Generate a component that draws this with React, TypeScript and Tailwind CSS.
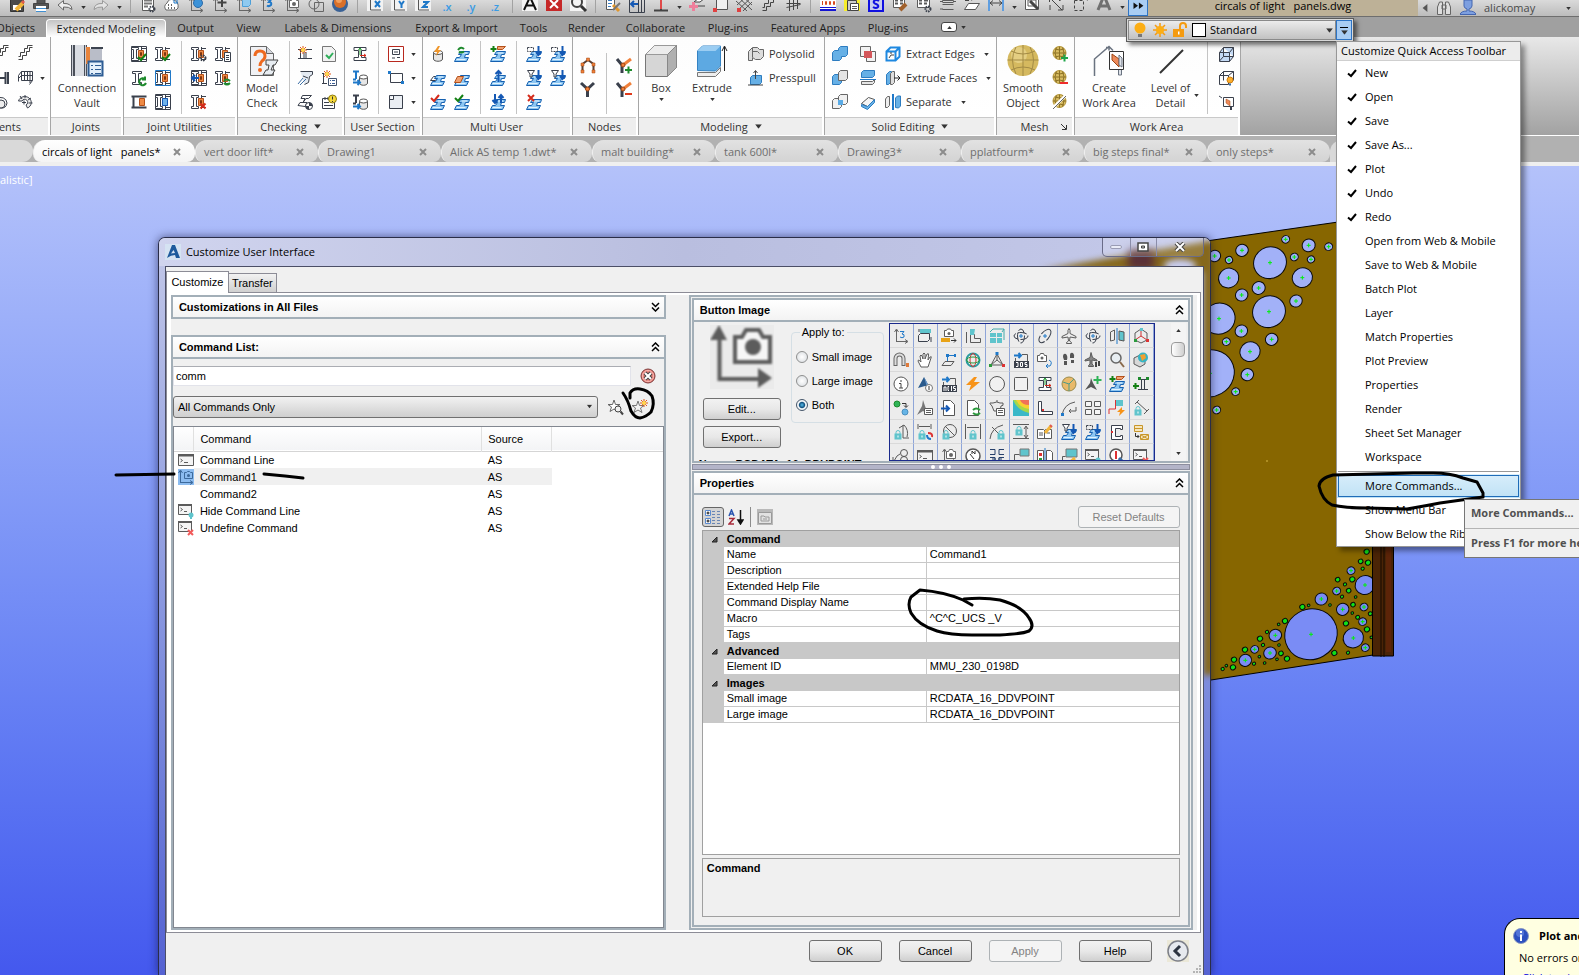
import type { ReactNode } from "react";

type PathProps = { d: string; c?: string; f?: string; w?: number };

const P = ({ d, c = "#5b5b5b", f = "none", w = 1 }: PathProps) => (
    <path d={d} stroke={c} fill={f} strokeWidth={w} />
);

const Dot = ({ x, y, r, f, c = "none" }: { x: number; y: number; r: number; f: string; c?: string }) => (
    <circle cx={x} cy={y} r={r} fill={f} stroke={c} />
);

// ---- shared icon parts ----
const TEAL = "#5fc4cc";
const DARK = "#3a404c";
const BLUE = "#1f78c8";

const beam = <P d="M1.5 1.5h9v2h-3v9h3v2h-9v-2h3v-9h-3z" c={DARK} f="#fff" />;
const joint = (
    <>
        <P d="M.5 1.5h7v2h-2v9h2v2h-7v-2h2v-9h-2z" c={DARK} f="#fff" />
        <P d="M10.5 1v14M15 2.5h-4M15 13.5h-4" c={DARK} />
        <P d="M7.5 4.5h5v7h-5z" c="#b4511a" f="#ee8a45" />
        <P d="M9.5 6.5h1v3h-1z" c="#7d3510" />
    </>
);
const frame = <P d="M.5.5h15v15H.5z" c={DARK} />;
const tick = (c: string) => <P d="M7 11l3 3 5-6" c={c} w={2} />;
const tickTop = (c: string) => <P d="M1 4l3 3 5-6" c={c} w={2} />;
const cross = (c: string) => <P d="M9.5 9.5l5 5m0-5l-5 5" c={c} w={2} />;
const plus = (c: string) => <P d="M12.5 8.5v7M9 12h7" c={c} w={2} />;
const gear = <circle cx="12" cy="12" r="2.5" fill="none" stroke={DARK} strokeWidth="2" strokeDasharray="1.5 .8" />;
const slab = (
    <>
        <P d="M6.5 5.5h9l-1 3h-3l-1 3h4l-2 4h-12l2-4h3l2-3h-3z" c="#1560b0" f="#8cc6f2" />
        <P d="M2.5 13.5h9M8 7h5" c="#e3f2fd" />
    </>
);
const lock = (
    <>
        <P d="M3 10V8.5a2 2 0 0 1 4 0V10" c={TEAL} />
        <path d="M1.500 9.500h7v6h-7z" fill={TEAL} />
        <path d="M4.500 11.500h1v2h-1z" fill="#fff" />
    </>
);
const axes = <P d="M3.5 14V2M1.5 4l2-3 2 3M3.5 13.5H14M12 11.5l3 2-3 2" c="#666" />;
const page = <P d="M2.5.5h7l4 4v11h-11z" c="#555" f="#fff" />;
const camera = (
    <>
        <P d="M5.5 3.5h2l1-2h3l1 2h2v7h-9z" c="#666" f="#fff" />
        <Dot x={10} y={7} r={2} f="#666" />
    </>
);
const terminal = (
    <>
        <P d="M.5 2.5h15v11H.5z" f="#f4f4f4" />
        <path d="M0 2h16v2.5H0z" fill="#5b5b5b" />
        <P d="M2.5 7l2 1.5-2 1.5M6 10.5h4" />
    </>
);
const terminalSmall = (
    <>
        <P d="M.5 1.5h13v10H.5z" f="#f4f4f4" />
        <path d="M0 1h14v2H0z" fill="#5b5b5b" />
        <P d="M2.5 5l2 1.5-2 1.5M6 8.5h3" />
    </>
);
const sunburst = (
    <>
        <P d="M6 0v8M2 4h8M3 1l6 6M9 1L3 7" c="#e0561b" />
        <Dot x={6} y={4} r={2} f="#ffd84d" />
    </>
);
const downArrow = <P d="M12.5 0v9M10 6l2.5 3L15 6" c="#1458b4" w={2} />;
const cyl = (
    <>
        <P d="M7.5 7v6c0 3 8 3 8 0V7" c="#555" f="#e6e6e6" />
        <ellipse cx="11.5" cy="7" rx="4" ry="2" fill="#fff" stroke="#555" />
    </>
);
const goldBall = (
    <>
        <Dot x={7.5} y={7} r={6.5} f="#d8bc62" c="#b39334" />
        <P d="M1 7h13M7.5.5v13M3 3q4.500 2 9 0M3 11q4.500-2 9 0M4.500 1.500q-3 5 0 11M10.500 1.500q3 5 0 11" c="#8d7224" />
    </>
);
const listCard = (
    <>
        <P d="M7.5 8.5h8v7h-8z" c="#44546e" f="#fff" />
        <P d="M9 10.5h1M11 10.5h3M9 13.5h1M11 13.5h3" c="#3a5c94" />
    </>
);

const icons: Record<string, ReactNode> = {
    // quick access toolbar
    saveAs: <><P d="M1.5.5h13v14h-13z" c="#333" f="#4a4a4a" /><path d="M4 8h8v5H4z" fill="#fff" /><P d="M7 13l7-7" c="#f2b53a" w={4} /><P d="M13 4l2 2" c="#e05a4e" w={3} /></>,
    print: <><P d="M4 6V1h8v5M.5 6.5h15v5H.5z" c="#444" f="#555" /><path d="M3 9h10v6H3z" fill="#fff" /><P d="M3 11.5h10M3 14.5h10" c="#3f8fd2" /></>,
    undo: <P d="M6.5 3.5v3q8-.5 8.5 6-3-3-8.5-2.5v3l-5.5-5z" c="#666" f="#eee" />,
    redo: <P d="M9.5 3.5v3q-8-.5-8.5 6 3-3 8.5-2.5v3l5.5-5z" c="#999" f="#e4e4e4" />,
    propertyList: <><P d="M2.5-.5h11v14h-11z" f="#fff" /><P d="M4 3.5h8M4 6.5h8M4 9.5h4" c="#777" w={2} />{gear}</>,
    pointCloud: <><P d="M2 13q-3-4 1-7 2-5 7-3 5 2 4 8l-2 2z" c="#666" f="#fff" /><P d="M4 8h1M7 8h1M4 11h1M7 11h1M10 11h1" w={2} c="#666" /><P d="M10 2v4h4M13 2v4" c={BLUE} /></>,
    ucsWorld: <>{axes}<Dot x={10} y={6} r={4.5} f="#3c92d8" c="#2a6aa8" /></>,
    ucsMove: <>{axes}<P d="M10 1v9M5.5 5.5h9" c="#444" w={2} /></>,
    ucsObject: <>{axes}<P d="M6.5 3.5l2-2h6v6l-2 2h-6z" c="#4d9fd8" f="#8fcaf0" /></>,
    ucs3: <>{axes}<P d="M7 2.5h4L9 5q3 0 2 3-2 2-4 .5" c={BLUE} w={2} /></>,
    ucsView: <>{axes}{camera}</>,
    region: <><P d="M6.5 5.5h9v9h-9z" c="#666" /><circle cx="6" cy="7" r="5" fill="none" stroke="#666" /></>,
    render: <><Dot x={8} y={7} r={8} f="#3a6296" /><Dot x={8} y={5} r={6} f="#d9702a" /><Dot x={7} y={3} r={3} f="#f0a060" /></>,
    axisX: <><path d="M0-1h16v15H0z" fill="#f2f2f2" /><P d="M3.5 0v13H14" c="#555" /><P d="M8 4l5 6M13 4l-5 6" c={BLUE} w={2} /></>,
    axisY: <><path d="M0-1h16v15H0z" fill="#f2f2f2" /><P d="M3.5 0v13H14" c="#555" /><P d="M8 4l2.5 3.5L13 4M10.5 7v4" c={BLUE} w={2} /></>,
    axisZ: <><path d="M0-1h16v15H0z" fill="#f2f2f2" /><P d="M3.5 0v13H14" c="#555" /><P d="M8 5h5l-5 5h5" c={BLUE} w={2} /></>,
    textStyle: <><path d="M0-1h16v15H0z" fill="#f5f5f5" /><P d="M2 13L8 0l6 13M4 8.5h8" c="#111" w={2} /></>,
    close: <><path d="M0-1h16v15H0z" fill="#c62828" /><P d="M4 3l8 8M12 3l-8 8" c="#fff" w={2} /></>,
    find: <><path d="M0-1h16v15H0z" fill="#f5f5f5" /><circle cx="7" cy="5" r="5" fill="none" stroke="#444" strokeWidth="2" /><P d="M11 9l5 5" c="#333" w={3} /></>,
    brushList: <><P d="M1.5-.5h8v13h-8z" f="#fff" /><P d="M3 3.5h4M3 6.5h4M3 9.5h3" c="#3a7cc0" /><P d="M8 8l6 6" c="#e0962c" w={3} /><P d="M8 13l7-7" c="#777" w={2} /></>,
    jointLeft: <>{frame}<P d="M9.5 0v15M12.5 0v15" c={DARK} /><P d="M2 7h7M5 4L2 7l3 3" c="#1458b4" w={2} /></>,
    weld: <><P d="M1 13.5h14M8 0v13" c="#444" w={2} /><P d="M8 1v11" c="#e04a4a" w={2} /></>,
    addBeam: <><P d="M5 5l5-4h6l-5 4zM8 9h8" c="#444" f="#fff" /><P d="M4.5 5v9M0 9.5h9" c="#ee7f9b" w={3} /></>,
    platePoint: <><P d="M3.5-.5h11v13h-11z" c="#555" f="#f1f1f1" /><path d="M0 11h4v4H0z" fill="#e04040" /></>,
    hatch: <><P d="M1 0l14 13M5-1l10 9M-1 4l11 10M15 0L1 13M10-1L0 8M15 5l-9 9" c="#555" /><path d="M0 11h4v4H0z" fill="#e04040" /></>,
    stairs: <P d="M1.5 13.5h4v-4h4v-4h3v-4h3M1.5 10.5h2v-4h4v-4h3v-3h5" c="#444" />,
    railing: <P d="M1.5 2.5h14M1.5 6.5h14M1.5 10.5l14-3M4.5 1v13M8.5 1v12M12.5 1v11" c="#444" />,
    thousand: <><path d="M0-1h16v15H0z" fill="#fff" /><path d="M0-1h16v3H0zM0 10h16v1H0zM0 12h16v2H0z" fill="#1414d2" /><P d="M2.5 4v4M5.5 4.5h1v3h-1zM9.5 4.5h1v3h-1zM13.5 4.5h1v3h-1z" c="#d84a1e" /></>,
    layers: <><path d="M0-1h16v15H0z" fill="#f7ee2c" /><P d="M3.5 3.5h9v10h-9z" c="#444" f="#ccc" /><P d="M6.5 6.5h8v7h-8z" c="#444" f="#fff" /><P d="M8 9.5h5M8 11.5h5" /></>,
    sCommand: <><P d="M1 0h14v14H1z" c="#1010e0" f="#c8cdee" w={2} /><P d="M11 4Q8 2 6 4q-1 2 2 3 3 1 2 3-2 2-5 0" c="#1010e0" w={2} /></>,
    listBrush: <><P d="M1.5.5h11v10h-11z" f="#fff" /><P d="M3 3.5h3M8 3.5h3M3 6.5h3M8 6.5h3" w={2} /><P d="M8 13l6-6" c="#a0602c" w={4} /></>,
    listGear: <><P d="M1.5.5h12v10h-12z" f="#fff" /><P d="M3 3.5h3M8 3.5h4M3 6.5h3M8 6.5h3" w={2} />{gear}</>,
    listRows: <P d="M2.5-.5h11v4h-11zM2.5 5.5h11M2.5 7.5h11M2.5 12.5h11M0 4.5h3M13 4.5h3M0 12h3" f="#f4f4f4" />,
    dxf: <><P d="M2 0v3h2V0M7 3l3-3M12 3V0h3" c="#444" w={2} /><P d="M.5 12.5l4-6h11l-4 6z" c="#555" f="#fff" /></>,
    dimension: <><P d="M1 0v14M15 0v14" c="#5f9ee0" w={2} /><P d="M2 6h12M5 3.5L2 6l3 2.5M11 3.5L14 6l-3 2.5" c="#444" /></>,
    picPen: <><P d="M1.5.5h13v12h-13zM4 3h8v6H4z" f="#fff" /><P d="M6 4l8 8" c="#444" w={3} /></>,
    scaleTool: <P d="M1.5 0v5M1 1h5M2 1l12 12M10 13h5V8M2 13V8M9 0l3 4M12 0v4" c="#444" />,
    dashedBox: <><path d="M2.5 3.5h9v10h-9z" fill="none" stroke="#444" strokeDasharray="3 2" /><P d="M8 1h6l2 2" c="#444" w={2} /></>,
    letterA: <P d="M2 13L7 1h2l5 12M4.5 9h7" c="#707070" w={3} />,

    // ribbon
    railPost: <P d="M0 8h12M2 5v6M12.5 2v12M15 2v12" c={DARK} w={2} />,
    railCage: <P d="M1.5 5.5l3-4h11v9l-3 4M4.5 1.5v9h11M1.5 5.5v6M1.5 8.5l3-3h11M7.5 1v10M10.5 1v10M13 1v12" c={DARK} />,
    spring: <><P d="M4 5a6 6 0 0 1 10 4q-1 6-7 5" c={DARK} /><Dot x={8} y={10} r={4} f="#eee" c={DARK} /></>,
    spiral: <><P d="M1.5 7a6.5 6 0 1 1 9 7l-1.5-3a3 3 0 1 0-4-4z" c={DARK} f="#eee" /><P d="M5 5L3 2M8 4V1M11 6l3-2M11.5 9h4M7 6.5v4M5 8.5h4" c={DARK} /></>,
    jFrameTick: <>{frame}{joint}{tick("#138013")}</>,
    jRefresh: <>{beam}<P d="M14 9a3.5 3.5 0 1 0 1 4M14 6.5v3h-3" c="#1d8a2c" w={2} /></>,
    jBox: <><P d="M.5 2.5h15M.5 13.5h15M2.5 2v12" c={DARK} w={2} /><P d="M8.5 4.5h5v7h-5z" c="#b4511a" f="#ee8a45" /></>,
    jTick: <>{joint}{tick("#138013")}</>,
    jBlueFrame: <>{joint}<P d="M.5.5h15v15H.5z" c={BLUE} /></>,
    jBluePlate: <>{frame}{joint}<P d="M7.5 4.5h5v7h-5z" c="#1458b4" f="#6fb2ea" /></>,
    jGear: <>{joint}{gear}</>,
    jArrow: <>{frame}{joint}<P d="M1 8h7M4 5L1 8l3 3" c="#1458b4" w={2} /></>,
    jDelete: <>{joint}{cross("#d42a1a")}</>,
    jList: <>{joint}<P d="M9.5 6.5h6v9h-6z" c={DARK} f="#fff" /><P d="M11 9.5h3M11 11.5h3M11 13.5h3" c={DARK} /></>,
    jSync: <>{joint}<P d="M9 11q3-3 6 0M15 13q-3 3-6 0" c="#1d8a2c" w={2} /></>,
    newBeam: <><P d="M1 3.5h4M1 12.5h14M3.5 4v9M7 4v9M9 3.5h6M9 6v6" c={DARK} />{sunburst}</>,
    pipeCheck: <><P d="M3.5 1.5h12v3l-3 2-1 6-4 2M6 6l5 2" c={DARK} f="#e3eaf2" /><P d="M1 14l5-6M3 15l6-6" c="#3a6ea5" /></>,
    slabCheck: <><P d="M5.5 1.5h9l-3 3H9l-3 4h4l-2 4-7-1 2-3h3l2-4h-4z" c={DARK} f="#fff" /><Dot x={12} y={12} r={3.5} f="#fff" c={DARK} /><path d="M12 8.5a3.5 3.5 0 0 1 3.5 3.5H8.5a3.5 3.5 0 0 0 3.5 3.5z" fill={DARK} /></>,
    docTick: <><P d="M1.5.5h9l4 4v11h-13z" c="#777" f="#f2f2f2" /><P d="M5 9l3 3 4-5" c="#2fae5a" w={2} /></>,
    beamList: <>{sunburst}<P d="M1 3.5h2M1 13.5h5M2.5 4v9" c={DARK} />{listCard}</>,
    noteWarn: <><P d="M1.5 4.5h12v10h-12z" c={DARK} f="#fff" /><P d="M3 8.5h5M3 11.5h9M4 3v3M7 3v3" c={DARK} /><Dot x={11.5} y={5} r={4} f="#f6d93a" c="#8c7a10" /><P d="M11.5 2.5v3M11.5 7v1" c="#333" /></>,
    beamAxis: <><P d="M2 1.5h12v3H9.5v7H14v3H2v-3h4.5v-7H2z" c={DARK} f="#fff" /><P d="M8 9V2M6.5 4L8 2l1.5 2" c="#1d9a2c" /><P d="M8 9.5h6M12 8l2 1.5-2 1.5" c="#d42a1a" /></>,
    sectionDb: <><P d="M1 1.5h6M4 2v7M1 9.5h3" c={BLUE} w={2} />{cyl}<P d="M1 12.5h7M5.5 10l2.5 2.5L5.5 15" c={BLUE} w={2} /></>,
    sectionDb2: <><P d="M1 1.5h6M4 2v7M1 9.5h3" c={DARK} w={2} />{cyl}<P d="M1 12.5h7M5.5 10l2.5 2.5L5.5 15" c={BLUE} w={2} /></>,
    redFrame: <><P d="M.5.5h15v15H.5z" c="#b8281e" f="#fff" w={1} /><P d="M4.5 3.5h7v5h-7zM6 6h4M4 12h3M9 11.5h3" c={DARK} /></>,
    rectPts: <><P d="M2.5 3.5h12v9h-12z" c={DARK} /><path d="M0 1h3v3H0zM13 11h3v3h-3z" fill={BLUE} /></>,
    viewBox: <P d="M1.5 1.5h13v13h-13zM1.5 5.5h4v-4" c={DARK} f="#eaeef3" />,
    dbFlash: <><P d="M3.5 6v7c0 3 9 3 9 0V6" c="#555" f="#e6e6e6" /><ellipse cx="8" cy="6.5" rx="4.5" ry="2" fill="#fff" stroke="#555" /><path d="M8 0L4 6h3l-1 4 5-6H8l2-4z" fill="#f0962a" /></>,
    slabSync: <>{slab}<P d="M4 4q3-4 6-1M10 5.5q-3 2-5 0" c="#1d8a2c" w={2} /></>,
    slabGrey: <><P d="M.5 10.5l3-4h5l-3 4z" c={DARK} f="#fff" />{slab}</>,
    slabOrange: <>{slab}<P d="M.5 12.5l3-6h6l-3 6z" c="#b4511a" f="#f0a070" /></>,
    slabRed: <>{slab}{tickTop("#d42a1a")}</>,
    slabGreen: <>{slab}{tickTop("#138013")}</>,
    slabAdd: <>{slab}<P d="M7.5.5h8l-3 3h-5z" c="#b4511a" f="#f0a070" /><P d="M3.5 0v6M.5 3h6" c="#138013" w={2} /></>,
    slabUp: <>{slab}<P d="M8.5 12V1M5.5 4l3-3 3 3" c="#1458b4" w={2} /></>,
    slabUpDown: <>{slab}<P d="M5 0v9M2.5 6L5 9l2.5-3M11 9V1M8.5 4L11 1l2.5 3" c="#1458b4" w={2} /></>,
    slabDown: <>{slab}<path d="M1.5 1.5h6v4h-6z" fill="none" stroke={DARK} strokeDasharray="2 1" />{downArrow}</>,
    slabFilter: <>{slab}<P d="M1.5.5h7L6 4v3H4V4z" c={DARK} f="#fff" />{downArrow}</>,
    slabDelete: <>{slab}<P d="M2 1l6 6M8 1L2 7" c="#d42a1a" w={2} /></>,
    nodeFrame: <><P d="M2.5 14V6L8 2l5.5 4v8" c="#5a4034" w={2} /><path d="M6.5 0h3v3h-3zM1 5h3v3H1zM12 5h3v3h-3zM1 12h3v3H1zM12 12h3v3h-3z" fill="#f0803a" stroke="#9c4412" strokeWidth=".5" /></>,
    nodeY: <><P d="M1 1l6.5 6L14 1M7.5 7v8" c={DARK} w={3} /><Dot x={7.5} y={7} r={2} f="#f0803a" c="#9c4412" /></>,
    nodeAdd: <><P d="M1 1l5 6v8" c={DARK} w={3} /><P d="M7 7l8-6" c="#f0803a" w={3} /><Dot x={7} y={7} r={2} f="#f0803a" c="#9c4412" />{plus("#1d8a2c")}</>,
    nodeRemove: <><P d="M1 1l5 6v8" c={DARK} w={3} /><P d="M7 7l8-6" c="#f0803a" w={3} /><Dot x={7} y={7} r={2} f="#f0803a" c="#9c4412" /><P d="M9 12h7" c="#e03a1a" w={2} /></>,
    polysolid: <P d="M.5 14.5v-9l4-4h5l2 2h4v7l-3 3h-5l-3-2v3zM4.5 2v9M4.5 5.5h5l2 2" c="#666" f="#ddd" />,
    presspull: <><P d="M2.5 7.5l2-2h9v7l-2 2h-9z" c="#2d7cc0" f="#66b0e6" /><P d="M0 15h15M7.5 9V1M5.5 3l2-2.5 2 2.5" c="#444" /></>,
    union: <P d="M.5 14.5v-8l2-2h4v-2l2-2h7v8l-2 2h-4v2l-2 2z" c="#2d7cc0" f="#66b0e6" />,
    subtract: <><P d="M.5 14.5v-8l2-2h7v8l-2 2z" c="#2d7cc0" f="#66b0e6" /><P d="M6.5 10.5v-8l2-2h7v8l-2 2z" c="#666" f="#e4e4e4" /></>,
    intersect: <><P d="M.5 14.5v-8l2-2h7v8l-2 2z" c="#666" f="#f0f0f0" /><P d="M6.5 10.5v-8l2-2h7v8l-2 2z" c="#666" f="#f0f0f0" /><path d="M6 6h5v5H6z" fill="#5aabe6" /></>,
    interfere: <><P d="M.5.5h10v10H.5z" c="#666" f="#f2f2f2" /><P d="M6.5 5.5h9v10h-9z" c="#666" f="#f2f2f2" /><path d="M4 5h8v7H4z" fill="#d4565a" /></>,
    slice: <><P d="M1.5 7.5v-5l2-2h11v5l-2 2z" c="#2d7cc0" f="#66b0e6" /><P d="M1.5 14.5v-3h11l2-2v3l-2 2z" c="#666" f="#e4e4e4" /><P d="M0 9.5h16" c={BLUE} /></>,
    thicken: <><P d="M1.5 9.5l7-6 6 2-7 7z" c="#555" f="#f5f5f5" /><P d="M1.5 10.5v2l6 3 7-7v-3l-7 7z" c="#2d7cc0" f="#66b0e6" /></>,
    extractEdges: <><P d="M1.5 14.5v-9l4-4h9v9l-4 4zM1.5 5.5h9v9M10.5 5.5l4-4" c="#1e88e0" w={2} /><P d="M4 12l2-3M6 8v-2M6 9h3" c="#444" /></>,
    extrudeFaces: <><P d="M1.5 14.5v-10l3-3h2v10l-3 3z" c="#2d7cc0" f="#66b0e6" /><P d="M5.5 14.5v-11l2-2h2v11l-2 2z" c="#666" f="#ddd" /><P d="M9 8h6M12.5 5.5L15 8l-2.5 2.5" c="#222" /></>,
    separate: <><P d="M.5 13.5V5l2-2.5h2v9l-2 2z" c="#666" f="#eee" /><P d="M10.5 13.5V4l2-2h3v10l-2 2z" c="#2d7cc0" f="#66b0e6" /><P d="M8 0v16" c={BLUE} w={2} /></>,
    meshMore: <>{goldBall}{plus("#1fa54a")}</>,
    meshLess: <>{goldBall}<P d="M8 13h8" c="#ee2b2b" w={2} /></>,
    meshRefine: <>{goldBall}<P d="M1 14L14 1" c="#fff" w={3} /><P d="M1 15L14 2" c="#666" /></>,
    cubeEdges: <P d="M1.5 15.5v-9l4-5h10v9l-4 5zM1.5 6.5h10v9M11.5 6.5l4-5M5.5 1.5v9h10M1.5 15l4-4.5" c={DARK} f="#c4daf5" />,
    cubeLight: <><P d="M1.5 14.5v-9l4-4h10v9M1.5 5.5h9v9h-9M10.5 5.5l5-4M5.5 1.5v9" c={DARK} /><Dot x={12} y={10} r={3} f="#fcae2c" c="#d08010" /><P d="M11 14.5h2" c="#3a6ea5" w={2} /></>,
    workArea: <><P d="M1 2l3 2M5.5 3.5h10v9h-10z" c={DARK} f="#fff" /><path d="M8 5l4 2v5l-4-3z" fill="#ee8a5a" stroke="#9c4412" strokeWidth=".5" /><P d="M13 12v4" c={DARK} w={2} /></>,

    // dialog
    command: terminal,
    hideCommand: <>{terminalSmall}<Dot x={13} y={12} r={2.5} f={TEAL} /><P d="M13 14v2" c={TEAL} w={2} /></>,
    undefineCommand: <>{terminalSmall}<P d="M10 10l5 5m0-5l-5 5" c="#f25a5a" w={2} /></>,
    ucsCamera: <><path d="M0 0h16v16H0z" fill="#8cbcf0" /><P d="M2.5 14V2M.5 4l2-3 2 3M2 13.5h12M12 11.5l3 2-3 2" c="#3d6a9c" /><P d="M6.5 3.5h2l1-1h2l1 1h2v6h-8z" c="#3d6a9c" /><Dot x={10.5} y={6.5} r={1.5} f="#3d6a9c" /></>,
    starSearch: <><P d="M6 1l1.5 4.5H12L8.5 8 10 12.5 6 10l-4 2.5L3.5 8 0 5.5h4.5z" c="#666" f="#fff" /><circle cx="10" cy="10" r="3" fill="#f0f0f0" stroke="#444" /><P d="M12.5 12.5L15 15.5" c="#444" w={2} /></>,
    starNew: <><P d="M6 2l1.5 4.5H12L8.5 9 10 13.5 6 11l-4 2.5L3.5 9 0 6.5h4.5z" c="#777" f="#f4f4f4" /><P d="M12 0v8M8 4h8M9 1l6 6M15 1L9 7" c="#e0561b" /><Dot x={12} y={4} r={2} f="#ffd84d" /></>,

    // image palette
    pPlan: <>{axes}<P d="M7 3.5h4L9 6q3 0 2 3-2 1.5-4 0" c={BLUE} /></>,
    pBoxRotate: <><path d="M3 1h11v4H3z" fill={TEAL} /><P d="M1.5 13.5v-6l2-2h9v6l-2 2zM14 9v5M2 1v3" c={DARK} f="#eee" /></>,
    pCamera: <><P d="M3.5 2.5h2l1-1.5h3l1 1.5h2v6h-9z" f="#fff" /><Dot x={8} y={5.5} r={1.5} f="#666" /><path d="M0 10h9v4H0z" fill="#e8a317" /><P d="M10 12.5h5M13 10.5l2 2-2 2" c="#333" /></>,
    pBlock: <><P d="M1.5 15V4M5.5 6.5h4v4h6v4h-10z" /><path d="M5 1h5l-1 6H5z" fill={TEAL} /></>,
    pCubes: <><path d="M1 5h6v4H1zM8 5h5v4H8zM1 10h6v5H1zM8 10h5v5H8z" fill={TEAL} /><P d="M1 4l3-3h11v11M13 4l2-3" c="#4aa" /></>,
    pOrbit: <><ellipse cx="8" cy="8" rx="7" ry="3.5" fill="none" stroke={DARK} strokeDasharray="9 2" /><ellipse cx="8" cy="8" rx="3.5" ry="7" fill="none" stroke={DARK} strokeDasharray="9 2" /><P d="M8 6v4M6 8h4" c={BLUE} /></>,
    pOrbitFree: <><ellipse cx="8" cy="8" rx="8" ry="4" fill="none" stroke={DARK} strokeDasharray="12 2" transform="rotate(-50 8 8)" /><P d="M8 6v4M6 8h4" c={BLUE} /></>,
    pPlane: <P d="M8 .5q1.5 1 1 5l6 3V10l-6-1-.5 4 2 1.5v1h-5v-1l2-1.5L7 9l-6 1V8.500l6-3q-.5-4 1-5z" f="#eee" />,
    pMirror: <><P d="M1.5 4l4-2v10l-4 1z" /><P d="M8 0v16" c={BLUE} /><path d="M10 3l5 1v9l-5-1z" fill={TEAL} stroke="#555" /></>,
    pTripod: <><P d="M8 2v6M8 8l-6 4M8 8l6 4" c="#c33" /><P d="M8 1l6 4v7l-6 3-6-3V5z" /><path d="M7 0h3v3H7z" fill={TEAL} /><path d="M1 11h3v3H1z" fill="#2a9a3c" /><path d="M13 11h3v3h-3z" fill="#d33" /></>,
    pMagnet: <><P d="M2.500 14V6.500a4 4 0 0 1 8 0V14" c="#666" w={4} /><P d="M2.500 13V6.500a4 4 0 0 1 8 0V13" c="#ddd" w={2} /><path d="M13 11h3v4h-3z" fill="#e07a3a" /></>,
    pHand: <P d="M4 15L1 9q0-2 2 0l1 1-1-6q1-2 2 0l1 3V2q1-2 2 0v5l2-5q2-1 1.5 1L11 8l2-3q2-1 1 1l-3 9z" f="#fff" />,
    pAlign: <><P d="M6.5 3.5h8M6.5 3v6" c={BLUE} /><path d="M5 2h3v3H5zM13 2h2v3h-2z" fill={BLUE} /><P d="M1 13.5l3-4h9l-3 4z" /></>,
    pGlobe: <><circle cx="8" cy="8" r="6.5" fill="none" stroke="#2a9aa0" strokeWidth="2" /><ellipse cx="8" cy="8" rx="3" ry="6.5" fill="none" stroke="#c33" /><ellipse cx="8" cy="8" rx="6.5" ry="3" fill="none" stroke="#2a9a3c" /></>,
    pTriad: <><P d="M8 2L2 13h12zM8 2v6l-6 5M8 8l6 5" /><path d="M6.500 0h3v3h-3z" fill={BLUE} /><path d="M0 12h3v3H0z" fill="#2a9a3c" /><path d="M13 12h3v3h-3z" fill="#d33" /></>,
    p3ds: <><P d="M1 3.5h7M5.5 1L8 3.5 5.500 6" c={BLUE} w={2} /><P d="M9 2.5h5.5V9M2.5 6v3" /><path d="M1 9h15v7H1z" fill={DARK} /><P d="M3 10.5h2v4H3M7.5 10.5v4h2v-4zM14 10.5h-2v2h2v2h-2" c="#fff" /></>,
    pCamUndo: <><P d="M.5 3.5h2l1-2h3l1 2h2v6h-9z" f="#fff" /><Dot x={5} y={6} r={1.5} f="#666" /><P d="M12 8q4 2 1 6h-4M11 12l-2 2 2 2" c={BLUE} /></>,
    pSteps: <path d="M2 5q0-4 3-3 2 2 1 6H3zM3 9h3v4H3zM9 3q0-3 3-2 2 2 1 5H9zM10 8h3v3h-3z" fill="#555" />,
    pPlaneSteps: <><P d="M6 .5l1.5 5L12 8v1L7 8v4l1.5 1.5v1h-5v-1L5 12V8L0 9V8l5-2.500z" f="#888" /><path d="M10 10h2v5h-2zM13 9h2v5h-2z" fill="#444" /></>,
    pMagnify: <><circle cx="7" cy="6" r="5" fill="#e8eef2" stroke="#666" strokeWidth="1.5" /><P d="M11 10l4 5" c="#8a6a4a" w={2} /></>,
    pWorldBox: <><P d="M1 6l6-3 5 3v6l-5 3-6-3z" f="#d8d8d8" /><Dot x={10} y={5.5} r={5} f="#36b4c4" /><path d="M7 3l5-1 1 4-4 3z" fill="#f0a030" /></>,
    pInfo: <><circle cx="8" cy="8" r="7" fill="#fff" stroke="#555" /><P d="M8 4v2M6 7.5h2V12M6 12h4" c="#444" /></>,
    pAutodesk: <><path d="M1 12L7 1l6 11-5-2z" fill="#2a5a8c" /><path d="M7 1l6 11-3-1z" fill="#6a98c8" /><Dot x={12} y={12} r={3.5} f="#fff" c="#777" /><P d="M12 10v4" c="#333" /></>,
    pAcis: <><P d="M1 3.5h7M5.5 1L8 3.5 5.500 6" c={BLUE} w={2} /><P d="M9 2.5h5.5V9M2.5 6v3" /><path d="M1 9h15v7H1z" fill={DARK} /><P d="M3 15v-4h2v4M8 10.5h-1v4h1M10.5 10v5M14.5 10.5h-2v2h2v2h-2" c="#fff" /></>,
    pFlash: <path d="M9 1L1 9h5l-2 6 11-9H9l3-5z" fill="#f79318" />,
    pCircle: <circle cx="8" cy="8" r="7.5" fill="#f1f1f1" stroke="#555" />,
    pSquare: <rect x="1.5" y="1.5" width="13" height="13" rx="1" fill="#f1f1f1" stroke="#555" />,
    pSphereCut: <><Dot x={8} y={8} r={7} f="#e8b96a" c="#9a8a4a" /><P d="M2 6l6 2 5-5M8 8v7" c="#4a9a8a" /></>,
    pStarAdd: <><path d="M6 2l2 5 4 7-6-3-6 3 5-7z" fill="#555" /><P d="M12.5 0v8M8.5 4h8" c="#2fb457" w={2} /></>,
    pBeamAdd: <><P d="M5 3.5h10M5 13.5h10M8.5 4v9M11.5 4v9" c={DARK} /><path d="M5 1h3v3H5zM13 1h3v3h-3z" fill="#1d8a2c" /><P d="M2.5 7v6M0 10h6" c="#138013" w={2} /></>,
    pReplace: <><Dot x={4} y={4} r={3} f="#2fb457" c="#1d8a2c" /><P d="M9 3.5h4V7M11 5.5l2 2 2-2" c="#333" /><Dot x={12} y={12} r={3} f="#66b4e6" c="#4a90c0" /></>,
    pStarList: <><path d="M6 0l2 6 3 8-5-3-6 4 5-9z" fill="#777" /><P d="M7.5 8.5h8v6h-8z" f="#fff" /><P d="M9 10.5h5M9 12.5h5" /></>,
    pPageIn: <>{page}<P d="M0 8.5h8M5 5.5l3 3-3 3" c="#1458b4" w={2} /></>,
    pPageSync: <>{page}<P d="M8 10q3-3 7 0M15 13q-3 3-7 0" c="#2a9a3c" w={2} /></>,
    pTeapot: <><P d="M3 6q-3-3-2-3h3q4-2 7 0h3q1 3-2 3l-1 5H5zM8 0v2" /><P d="M7.5 8.5h8v7h-8z" f="#fff" /><P d="M9 10.5h5M9 12.5h5" /></>,
    pRainbow: <><path d="M0 0h16v16H0z" fill="#3ab8c8" /><path d="M0 0h16v13Q5 11 0 0z" fill="#a4d84a" /><path d="M3 0h13v9Q7 8 3 0z" fill="#f8d030" /><path d="M7 0h9v5Q9 5 7 0z" fill="#f0705a" /></>,
    pAngle: <><P d="M1.5 1.5h3v10h11v3h-14z" c={DARK} f="#fff" /><path d="M5 9h2v2H5z" fill="#d33" /></>,
    pArcBack: <><P d="M1 15Q3 4 14 2M15 7v4H8M10 9l-2 2 2 2" /><path d="M0 13h3v3H0z" fill={BLUE} /></>,
    pWindows: <P d="M.5 1.5h6v5h-6zM9.5 1.5h6v5h-6zM.5 9.5h6v5h-6zM9.5 9.5h6v5h-6z" f="#f6f6f6" />,
    pFlagFlash: <><path d="M7 0h7v6H7z" fill={TEAL} /><P d="M6.5 0v9H0v5" c="#d33" /><path d="M13 7l-5 5h3l-1 4 6-6h-3z" fill="#f79318" /></>,
    pLockDim: <><P d="M4 2l10 9M2 4l4-4M11 14l5-5" />{lock}</>,
    pLockAngle: <><P d="M10 1v13h6M6 4l5-3q5 5 3 12" />{lock}</>,
    pLockSync: <><P d="M1 0v5M14 0v5M2 2.5h11" />{lock}<P d="M11 9q5 0 4 4" c="#d33" w={2} /><P d="M10 11q0 4 4 4" c={BLUE} w={2} /></>,
    pLockDia: <><circle cx="9" cy="7" r="6.5" fill="none" stroke="#555" /><P d="M4 2l10 10" />{lock}</>,
    pLockHor: <><P d="M.5 0v15M15.5 0v15M2 3.5h12" /><g transform="translate(3 0)">{lock}</g></>,
    pLockArc: <><P d="M1 15Q2 4 14 1M3 3l8 8" /><g transform="translate(7 0)">{lock}</g></>,
    pLockVert: <><P d="M0 .5h16M0 14.5h16M13 3v10M11 5l2-3 2 3M11 11l2 3 2-3" /><g transform="translate(1 -4)">{lock}</g></>,
    pBookPen: <><P d="M.5 5.5h6l1 1 1-1h6v9H.5zM7.5 6v8M2 9h4M2 11h4M10 9h3" f="#fff" /><P d="M8 9l6-7" c="#f2b53a" w={3} /><P d="M13 1l2 2" c="#e05a4e" w={2} /></>,
    pChannel: <><P d="M2.5 1.5h11v4h-2v-1h-5v8h5v-1h2v4h-11z" c={DARK} f="#fff" /><path d="M2 7h2v2H2z" fill="#d33" /></>,
    pBoxSwap: <><P d="M1.5 1.5h8v6h-8zM1.5 4.5h8M7.5 10.5h8v5h-8zM8 11l7 4M15 11l-7 4" c="#c8962a" f="#f6e6bd" /><P d="M2.5 9v3.5H6M4.5 11L6 12.500 4.500 14" c="#333" /></>,
    pLinks: <><circle cx="11" cy="5" r="3.5" fill="none" stroke="#555" /><circle cx="11" cy="12" r="3.5" fill="none" stroke="#555" /><P d="M1 13l3-5 3-2M0 9v5h4" /></>,
    pCompass: <><circle cx="8" cy="8" r="7" fill="#fff" stroke="#555" strokeWidth="1.5" /><P d="M7 6V3l3 3V3M5 6l4 5" c="#333" /></>,
    pFourBeams: <P d="M1 1.5h5v5H1M1 14.5h5v-5H1M15 1.5h-5v5h5M15 14.5h-5v-5h5M3 11h4M9 11h4" c="#27406a" />,
    pTealBox: <><path d="M7 1h9v7H7z" fill={TEAL} stroke="#777" /><P d="M1.5 15V6.5h5" /></>,
    pMirrorPage: <><P d="M.5 2.5h6v12h-6zM9.5 2.5h4l2 2v10h-6z" f="#fff" /><P d="M8 0v16" c={BLUE} /><path d="M2 5h3v3H2z" fill="#d33" /><path d="M2 10h3v3H2z" fill="#2a9a3c" /></>,
    pTealPen: <><path d="M5 1h11v8H5z" fill={TEAL} stroke="#777" /><P d="M1.5 15V8.5h3" /><P d="M8 15l6-5" c="#f2b53a" w={3} /></>,
    pCompassPen: <><circle cx="7" cy="7" r="6" fill="#fff" stroke="#555" strokeWidth="1.5" /><P d="M7 3v8" c="#d33" w={2} /><P d="M10 10l5 5" c="#3a6ea5" w={3} /></>,
};

const Icon = ({ name, className = "size-4" }: { name: string; className?: string }) => (
    <svg viewBox="0 0 16 16" className={`${className} shrink-0 overflow-visible`} aria-hidden="true">
        {icons[name]}
    </svg>
);

const Caret = ({ className = "" }: { className?: string }) => (
    <svg viewBox="0 0 6 4" className={`h-[3px] w-[5px] shrink-0 ${className}`} aria-hidden="true">
        <path d="M0 0h6L3 4z" fill="#333" />
    </svg>
);

// ---- quick access toolbar ----
const quickItems = (
    "saveAs print undo ^ redo ^ | propertyList pointCloud ucsWorld ucsMove ucsObject ucs3 ucsView region render | " +
    "axisX axisY axisZ .x .y .z | textStyle close find | brushList jointLeft weld ^ addBeam platePoint hatch stairs railing | " +
    "thousand layers sCommand listBrush listGear listRows dxf dimension ^ picPen scaleTool dashedBox letterA ^"
).split(" ");

const QuickItem = ({ item }: { item: string }) => {
    if (item === "|")
        return <span className="flex h-4 w-[11px] justify-center"><i className="w-px bg-[#a2a2a2]" /></span>;
    if (item === "^")
        return <span className="flex h-3 w-3 items-center justify-center"><Caret /></span>;
    if (item.startsWith("."))
        return <button className="h-[13px] w-6 leading-3 font-semibold text-[#3a9be4]">{item}</button>;
    return (
        <button aria-label={item} className="flex w-6 justify-center">
            <Icon name={item} />
        </button>
    );
};

const QuickAccess = () => (
    <header className="flex h-[17px] overflow-hidden border-b border-[#6e6e6e] bg-gradient-to-b from-[#dadada] to-[#bcbcbc]">
        <div className="flex shrink-0 items-end pb-[3px] pl-[5px]">
            {quickItems.map((item, i) => <QuickItem key={i} item={item} />)}
        </div>
        <button aria-label="More tools" className="w-5 shrink-0 border border-t-0 border-[#2e74c4] bg-[#a9cdf3]">
            <svg viewBox="0 0 20 16" className="h-4 w-[18px]"><path d="M5 2l5 3.5L5 9zM11 2l5 3.5L11 9z" fill="#111" /></svg>
        </button>
        <div className="flex-1 overflow-hidden bg-[#bdb197] text-center leading-3 whitespace-pre text-black">
            circals of light   panels.dwg
        </div>
        <div className="flex w-[161px] shrink-0 items-center gap-2 pl-1 text-[#4a4a4a]">
            <svg viewBox="0 0 6 10" className="h-2 w-1.5"><path d="M6 0v10L0 5z" fill="#555" /></svg>
            <svg viewBox="0 0 16 16" className="size-4">
                <path d="M1.5 14.5V7l2-5h3v12.5zM9.5 14.5V2h3l2 5v7.5zM6 5h4v4H6z" fill="#ddd" stroke="#666" />
            </svg>
            <svg viewBox="0 0 16 16" className="size-4">
                <path d="M4 0h8v6q-1 3-3 3v2q6 0 7 3.5H0Q1 11 7 11V9Q4 8 4 6z" fill="#7d9fe0" stroke="#4466b0" />
            </svg>
            <button className="h-4 leading-3">alickomay</button>
            <Caret className="ml-auto mr-2" />
        </div>
    </header>
);

// ---- ribbon ----
const ribbonTabs: [string, string][] = [
    ["Objects", "w-[46px] justify-end pr-[11px]"],
    ["Extended Modeling", "w-[120px] justify-center rounded-t-sm border border-b-0 border-white bg-gradient-to-b from-[#c4c4c4] to-white"],
    ["Output", "w-[59px] justify-center"],
    ["View", "w-[47px] justify-center"],
    ["Labels & Dimensions", "w-[132px] justify-center"],
    ["Export & Import", "w-[105px] justify-center"],
    ["Tools", "w-[49px] justify-center"],
    ["Render", "w-[57px] justify-center"],
    ["Collaborate", "w-[81px] justify-center"],
    ["Plug-ins", "w-[64px] justify-center"],
    ["Featured Apps", "w-[96px] justify-center"],
    ["Plug-ins", "w-[64px] justify-center"],
];

const RibbonTabs = () => (
    <nav className="flex h-5 items-end bg-[#a0a0a0] text-[#1c1c1c]">
        {ribbonTabs.map(([label, cls], i) => (
            <button key={i} className={`flex h-[18px] shrink-0 items-center whitespace-nowrap ${cls}`}>{label}</button>
        ))}
        <button aria-label="Minimize ribbon" className="ml-[21px] flex h-5 items-center gap-1">
            <span className="flex h-2.5 w-4 items-center justify-center rounded-[3px] border border-[#444] bg-white">
                <Caret className="rotate-180" />
            </span>
            <Caret />
        </button>
    </nav>
);

const Panel = ({ title, width, caret, corner, children }: {
    title: string; width: string; caret?: boolean; corner?: boolean; children: ReactNode;
}) => (
    <section className={`flex shrink-0 flex-col overflow-hidden border-r border-[#a6a6a6] bg-white ${width}`}>
        <div className="flex h-20 overflow-hidden bg-gradient-to-b from-[#fdfdfd] to-white">{children}</div>
        <h2 className="relative mr-0.5 flex h-[18px] items-center justify-center gap-2 border-t border-[#c9c9c9] bg-[#eeeeee] whitespace-nowrap text-[#333]">
            {title}
            {caret && <Caret className="scale-150" />}
            {corner && (
                <svg viewBox="0 0 8 8" className="absolute right-1 size-2"><path d="M1 1l5 5M6.5 2v4.5H2" stroke="#333" fill="none" /></svg>
            )}
        </h2>
    </section>
);

const Col = ({ names, className = "" }: { names: string; className?: string }) => (
    <div className={`flex w-6 shrink-0 flex-col pt-[5px] ${className}`}>
        {names.split(" ").map((n, i) => (
            <button key={i} aria-label={n} className="flex size-6 items-center justify-center">
                <Icon name={n} />
            </button>
        ))}
    </div>
);

const Carets = ({ show = [1, 1, 1] }: { show?: number[] }) => (
    <div className="flex w-2.5 shrink-0 flex-col pt-[5px]">
        {show.map((s, i) => <span key={i} className="flex h-6 items-center justify-center">{s ? <Caret /> : null}</span>)}
    </div>
);

const Rule = ({ className = "w-3" }: { className?: string }) => (
    <div className={`flex shrink-0 justify-center pt-1 pb-[3px] ${className}`}><i className="w-px bg-[#c4c4c4]" /></div>
);

const Big = ({ label, width, caret, children }: { label: string; width: string; caret?: boolean; children: ReactNode }) => (
    <button className={`flex shrink-0 flex-col items-center pt-2 leading-[15px] text-[#333] ${width}`}>
        <svg viewBox="0 0 32 32" className="size-8 shrink-0 overflow-visible" aria-hidden="true">{children}</svg>
        <span className="mt-[3px] whitespace-pre">{label}</span>
        {caret && <Caret className="mt-[3px]" />}
    </button>
);

const Wide = ({ icon, label, caret }: { icon: string; label: string; caret?: boolean }) => (
    <button className="flex h-6 items-center gap-[5px] whitespace-nowrap text-[#333]">
        <Icon name={icon} />
        {label}
        {caret && <Caret className="ml-1" />}
    </button>
);

const Ribbon = () => (
    <div className="flex h-[99px] overflow-hidden border-b border-white bg-gradient-to-b from-[#e8e8e8] to-[#a2a2a2]">
        <Panel title="Elements" width="w-[51px] [&>h2]:justify-end [&>h2]:pr-[27px]">
            <Col names="stairs railPost spring" className="-ml-[11px]" />
            <Col names="stairs railCage spiral" />
            <Carets show={[0, 1, 0]} />
        </Panel>
        <Panel title="Joints" width="w-[73px]">
            <Big label={"Connection\nVault"} width="w-full">
                <path d="M0 0h4v31H0zM13 0h3v31h-3z" fill="#4a4f59" />
                <path d="M1 0h1v31H1zM14 0h1v31h-1z" fill="#c9ccd4" />
                <path d="M4 0h9v31H4z" fill="#d9dce2" />
                <path d="M16 4h15v14H16z" fill="#b9bdc8" />
                <path d="M15 2h4v17h-4z" fill="#e8843c" />
                <path d="M20 3h12" stroke="#3d4450" strokeWidth="2" />
                <path d="M17.500 16.500h14v14h-14z" fill="#e4f0fb" stroke="#2d5c94" strokeWidth="2" />
                <path d="M20 20.500h2M24 20.500h6M20 24.500h2M24 24.500h6M20 28.500h2M24 28.500h6" stroke="#2d5c94" />
            </Big>
        </Panel>
        <Panel title="Joint Utilities" width="w-[114px]">
            <Col names="jFrameTick jRefresh jBox" className="ml-[3px]" />
            <Col names="jTick jBlueFrame jBluePlate" />
            <Rule />
            <Col names="jGear jArrow jDelete" />
            <Col names="jList jSync" />
        </Panel>
        <Panel title="Checking" width="w-[107px]" caret>
            <Big label={"Model\nCheck"} width="w-12">
                <path d="M4.500 1.500h16l7 7v22h-23z" fill="#f0f1f4" stroke="#666" />
                <path d="M20.500 1.500v7h7" fill="#d4d7de" stroke="#666" />
                <path d="M9 11q0-5 5-5t5 5q0 3-3 5-2 2-2 5" fill="none" stroke="#ee6a20" strokeWidth="3" />
                <circle cx="14" cy="25" r="2" fill="#ee6a20" />
                <path d="M20 15h12l-3 5h-2l-2 5h4l-3 5h-9l3-5h2l1-5h-3z" fill="#e8edf2" stroke="#444" />
            </Big>
            <Rule className="w-[7px]" />
            <Col names="newBeam pipeCheck slabCheck" />
            <Col names="docTick beamList noteWarn" />
        </Panel>
        <Panel title="User Section" width="w-[78px]">
            <Col names="beamAxis sectionDb sectionDb2" className="ml-[3px]" />
            <Rule />
            <Col names="redFrame rectPts viewBox" />
            <Carets />
        </Panel>
        <Panel title="Multi User" width="w-[150px]">
            <Col names="dbFlash slabGrey slabRed" className="ml-[3px]" />
            <Col names="slabSync slabOrange slabGreen" />
            <Rule />
            <Col names="slabAdd slabUp slabUpDown" />
            <Rule />
            <Col names="slabDown slabFilter slabDelete" />
            <Col names="slabDown slabFilter" />
        </Panel>
        <Panel title="Nodes" width="w-[66px]">
            <Col names="nodeFrame nodeY" className="ml-[3px] pt-[17px]" />
            <Rule className="w-3 pt-4 pb-4" />
            <Col names="nodeAdd nodeRemove" className="pt-[17px]" />
        </Panel>
        <Panel title="Modeling" width="w-[186px]" caret>
            <Big label="Box" width="w-11" caret>
                <path d="M.5 31.500v-22l9-9h22v22l-9 9z" fill="#d6d6d6" stroke="#777" />
                <path d="M.5 9.500l9-9h22l-9 9z" fill="#ececec" stroke="#999" />
                <path d="M22.500 9.500l9-9v22l-9 9z" fill="#b0b0b0" stroke="#888" />
            </Big>
            <Big label="Extrude" width="w-[58px]" caret>
                <path d="M1.500 31.500v-4h18l5-5v4l-5 5z" fill="#eee" stroke="#777" />
                <path d="M1.500 25.500V6l5-5h18v20l-5 5z" fill="#5da9e2" stroke="#3483c4" />
                <path d="M1.500 6l5-5h18l-5 5z" fill="#9bcdf2" />
                <path d="M28.500 26V2M26 6l2.500-5L31 6" fill="none" stroke="#222" />
            </Big>
            <div className="ml-[7px] pt-[5px]">
                <Wide icon="polysolid" label="Polysolid" />
                <Wide icon="presspull" label="Presspull" />
            </div>
        </Panel>
        <Panel title="Solid Editing" width="w-[172px]" caret>
            <Col names="union subtract intersect" className="ml-[3px]" />
            <Col names="interfere slice thicken" className="ml-1" />
            <div className="ml-[5px] pt-[5px]">
                <Wide icon="extractEdges" label="Extract Edges" caret />
                <Wide icon="extrudeFaces" label="Extrude Faces" caret />
                <Wide icon="separate" label="Separate" caret />
            </div>
        </Panel>
        <Panel title="Mesh" width="w-[78px]" corner>
            <Big label={"Smooth\nObject"} width="w-[52px]">
                <circle cx="16" cy="15.500" r="15.500" fill="#d5b95f" />
                <circle cx="12" cy="10" r="8" fill="#ead792" opacity=".7" />
                <path d="M.5 15h31M16 0v31M4 6q12 6 24 0M4 25q12-6 24 0M9 2q-7 13 0 27M23 2q7 13 0 27" fill="none" stroke="#a38b45" />
            </Big>
            <Col names="meshMore meshLess meshRefine" className="-ml-px" />
        </Panel>
        <Panel title="Work Area" width="w-[166px]">
            <Big label={"Create\nWork Area"} width="w-[68px]">
                <path d="M1.500 31V14L16 1.500l4 4M13 2.500h3v3" fill="none" stroke="#6a7380" strokeWidth="1.500" />
                <path d="M16.500 6.500h14v18h-14z" fill="#fff" stroke="#333" />
                <path d="M19 9l7 5v8l-7-7z" fill="#ee8a5a" stroke="#9c4412" />
                <path d="M26 10l3 3v9l-3-2zM25.500 25v5h3v-5" fill="#dfe3ea" stroke="#6a7380" />
            </Big>
            <Big label={"Level of\nDetail"} width="w-[55px]">
                <path d="M5 28L28 5" stroke="#333" strokeWidth="2" />
            </Big>
            <div className="-ml-1 flex items-end pb-5"><Caret /></div>
            <Rule className="w-[17px]" />
            <Col names="cubeEdges cubeLight workArea" className="-ml-0.5" />
        </Panel>
    </div>
);

// ---- drawing tabs ----
const drawings: [string, string][] = [
    ["circals of light   panels*", "w-[162px] bg-gradient-to-b from-white to-[#f4f4f4] text-black"],
    ["vert door lift*", "w-[123px]"],
    ["Drawing1", "w-[123px]"],
    ["Alick AS temp 1.dwt*", "w-[151px]"],
    ["malt building*", "w-[123px]"],
    ["tank 600l*", "w-[123px]"],
    ["Drawing3*", "w-[123px]"],
    ["pplatfourm*", "w-[123px]"],
    ["big steps final*", "w-[123px]"],
    ["only steps*", "w-[123px]"],
];

const CloseMark = () => (
    <svg viewBox="0 0 8 8" className="size-2" aria-hidden="true"><path d="M1 1l6 6M7 1L1 7" stroke="#8c8c8c" strokeWidth="2" /></svg>
);

const DrawingTabs = () => (
    <div className="flex h-[30px] overflow-hidden border-b-4 border-[#efefef] bg-[#b1b1b1] pt-1">
        <div className="w-[33px] shrink-0 rounded-r-xl bg-[#d9d9d9]" />
        {drawings.map(([name, cls], i) => (
            <div
                key={name}
                className={`flex shrink-0 items-center justify-between rounded-t-xl rounded-b-lg border-l border-[#efefef] pt-px pr-[14px] pl-2 ${cls} ${
                    i === 0 ? "" : "bg-gradient-to-b from-[#e2e2e2] to-[#d3d3d3] text-[#6e6e6e]"
                }`}
            >
                <button className="whitespace-pre">{name}</button>
                <button aria-label={`Close ${name}`}><CloseMark /></button>
            </div>
        ))}
        <div className="w-3 shrink-0 rounded-tl-xl bg-[#d9d9d9]" />
    </div>
);

// ---- model space: plate with cut-outs, [x, y, r] in thirds of a pixel ----
const holes: number[][] = [
    [497, 718, 12], [366, 751, 19], [327, 780, 11], [284, 768, 18], [450, 788, 50], [566, 736, 20], [626, 740, 12],
    [523, 771, 12], [573, 778, 11], [547, 833, 31], [326, 834, 31], [416, 864, 20], [365, 885, 19], [528, 903, 19],
    [297, 956, 49], [447, 935, 50], [364, 993, 19], [319, 1025, 12], [455, 1018, 19], [390, 1055, 31],
    [382, 1124, 19], [270, 1120, 74], [347, 1175, 12], [290, 1230, 12],
    [740, 1655, 8], [722, 1684, 7], [744, 1688, 8], [693, 1712, 12], [728, 1706, 5], [653, 1739, 7], [697, 1738, 8],
    [675, 1753, 5], [735, 1755, 30], [650, 1773, 12], [686, 1772, 7], [604, 1797, 19], [666, 1790, 5], [707, 1791, 4],
    [547, 1821, 8], [566, 1816, 4], [630, 1815, 4], [699, 1814, 7], [668, 1828, 19], [732, 1821, 12], [697, 1839, 4],
    [751, 1841, 6], [713, 1852, 6], [728, 1865, 12], [495, 1863, 8], [476, 1873, 4], [678, 1870, 8], [573, 1903, 80],
    [741, 1888, 8], [700, 1914, 31], [441, 1896, 5], [466, 1906, 19], [420, 1916, 8], [754, 1912, 4], [736, 1943, 12],
    [429, 1935, 5], [477, 1935, 4], [375, 1949, 8], [404, 1948, 12], [450, 1959, 19], [483, 1960, 7], [643, 1959, 8],
    [684, 1958, 5], [501, 1976, 8], [418, 1970, 4], [471, 1978, 4], [342, 1979, 8], [376, 1981, 19], [434, 1989, 4],
    [402, 1991, 5], [339, 2002, 8], [319, 1997, 4], [308, 2007, 5],
];

const Plate = () => (
    <svg className="absolute top-0 left-0 h-full w-full" aria-hidden="true">
        <g transform="translate(1120 -166)">
            <path d="M-84 265.500L253 217v438L-84 707z" fill="#876600" stroke="#000" />
            {holes.map(([x, y, r], i) => {
                const small = r < 9;
                return (
                    <g key={i} transform={`translate(${x / 3} ${y / 3})`}>
                        <ellipse rx={r / 3} ry={(r / 3) * 0.94} transform="rotate(-30)" fill={small ? "#0fe01a" : y > 1500 ? "#7a8cf5" : "#a2b1f8"} stroke="#0a0a0a" />
                        {!small && <path d="M-2 0h4M0-2v4" stroke="#00f00a" />}
                    </g>
                );
            })}
            <path d="M252.500 230h21v426h-21z" fill="#4a2406" stroke="#000" />
            <path d="M261 230v427M264 230v427" stroke="#140800" />
            <path d="M266 230h5v422h-5z" fill="#5c2408" />
            <circle cx="147" cy="461" r=".7" fill="#f0d060" />
        </g>
    </svg>
);

// ---- customize user interface dialog ----
const Chevrons = ({ down }: { down?: boolean }) => (
    <svg viewBox="0 0 9 10" className={`h-2.5 w-[9px] ${down ? "rotate-180" : ""}`} aria-hidden="true">
        <path d="M1 4.500L4.500 1 8 4.500M1 9l3.500-3.500L8 9" stroke="#000" strokeWidth="1.500" fill="none" />
    </svg>
);

const GroupHeader = ({ title, down }: { title: string; down?: boolean }) => (
    <div className="flex h-[22px] shrink-0 items-center justify-between border-b-2 border-[#a3afb8] bg-gradient-to-b from-white to-[#f3f3f3] pr-1 pl-1.5">
        <h3 className="font-bold">{title}</h3>
        <button aria-label={`Toggle ${title}`}><Chevrons down={down} /></button>
    </div>
);

const Push = ({ children, disabled, className = "" }: { children: ReactNode; disabled?: boolean; className?: string }) => (
    <button
        disabled={disabled}
        className={`h-[22px] rounded-[3px] border text-center leading-4 ${
            disabled ? "border-[#adb2b5] bg-[#f4f4f4] text-[#838383]" : "border-[#707070] bg-gradient-to-b from-[#f2f2f2] via-[#e8e8e8] via-50% to-[#cfcfcf]"
        } ${className}`}
    >
        {children}
    </button>
);

const commands: [string, string][] = [
    ["command", "Command Line"],
    ["ucsCamera", "Command1"],
    ["", "Command2"],
    ["hideCommand", "Hide Command Line"],
    ["undefineCommand", "Undefine Command"],
];

const CommandList = () => (
    <section className="mt-4 flex min-h-0 flex-1 flex-col border-2 border-[#a3afb8]">
        <GroupHeader title="Command List:" />
        <div className="mt-[7px] flex items-center">
            <input
                aria-label="Search command list"
                defaultValue="comm"
                className="h-5 min-w-0 flex-1 border border-[#e2e3ea] border-t-[#abadb3] bg-white px-0.5 outline-none"
            />
            <button aria-label="Clear search" className="mr-2 ml-[9px]">
                <svg viewBox="0 0 16 16" className="size-4">
                    <circle cx="8" cy="8" r="7" fill="#ea8079" stroke="#7c3b3b" />
                    <circle cx="8" cy="8" r="5.500" fill="none" stroke="#f6b8b2" />
                    <path d="M5 5l6 6M11 5l-6 6" stroke="#444" strokeWidth="4" />
                    <path d="M5 5l6 6M11 5l-6 6" stroke="#fff" strokeWidth="2" />
                </svg>
            </button>
        </div>
        <div className="mt-2.5 flex items-center">
            <div className="relative min-w-0 flex-1">
                <select
                    aria-label="Command category"
                    className="block h-[22px] w-full appearance-none rounded-[3px] border border-[#707070] bg-gradient-to-b from-[#f2f2f2] to-[#cfcfcf] pl-1"
                >
                    <option>All Commands Only</option>
                </select>
                <Caret className="absolute top-[9px] right-1.5 scale-125" />
            </div>
            <button aria-label="Find command in tree" className="ml-2.5"><Icon name="starSearch" /></button>
            <button aria-label="Create a new command" className="mr-4 ml-2"><Icon name="starNew" /></button>
        </div>
        <div className="mt-2 min-h-0 flex-1 border border-[#828790] bg-white">
            <table className="w-full table-fixed border-collapse text-left">
                <thead>
                    <tr className="h-6 border-b border-[#d5d5d5] bg-gradient-to-b from-white to-[#f3f4f6]">
                        <th className="w-5 border-r border-[#e0e0e0]" />
                        <th className="border-r border-[#e0e0e0] pl-1.5 font-normal">Command</th>
                        <th className="w-[70px] border-r border-[#e0e0e0] pl-1.5 font-normal">Source</th>
                        <th className="w-[111px]" />
                    </tr>
                </thead>
                <tbody>
                    {commands.map(([icon, name]) => (
                        <tr key={name} className="h-[17px]">
                            <td className="p-0 pl-1">{icon && <Icon name={icon} className="block size-4" />}</td>
                            <td className={`p-0 pl-1.5 leading-4 ${name === "Command1" ? "bg-[#f0f0f0]" : ""}`}>{name}</td>
                            <td className={`p-0 pl-1.5 leading-4 ${name === "Command1" ? "bg-[#f0f0f0]" : ""}`}>AS</td>
                            <td className="p-0" />
                        </tr>
                    ))}
                </tbody>
            </table>
        </div>
    </section>
);

const palette = (
    "pPlan pBoxRotate pCamera pBlock pCubes pOrbit pOrbitFree pPlane pOrbit pMirror pTripod " +
    "pMagnet pHand pAlign pGlobe pTriad p3ds pCamUndo pSteps pPlaneSteps pMagnify pWorldBox " +
    "pInfo pAutodesk pAcis pFlash pCircle pSquare beamAxis pSphereCut pStarAdd slabAdd pBeamAdd " +
    "pReplace pStarList pPageIn pPageSync pTeapot pRainbow pAngle pArcBack pWindows pFlagFlash pLockDim " +
    "pLockAngle pLockSync pLockDia pLockHor pLockArc pLockVert pBookPen slabFilter slabDown pChannel pBoxSwap " +
    "pLinks command ucsView pCompass pFourBeams pTealBox pMirrorPage pTealPen hideCommand pCompassPen undefineCommand"
).split(" ");

const radioCls =
    "size-3 appearance-none rounded-full border border-[#8e8f8f] bg-[radial-gradient(#ffffff,#d6dade)] checked:border-[#45566a] checked:bg-[radial-gradient(circle,#59c0ee_0%,#12507e_38%,#f2f6f9_52%)]";

const ButtonImage = () => (
    <section className="flex h-[165px] flex-col overflow-hidden border-2 border-[#a3afb8]">
        <GroupHeader title="Button Image" />
        <div className="flex min-h-0 flex-1 pt-px">
            <div className="w-[97px] shrink-0 pl-[9px]">
                <svg viewBox="0 0 64 64" className="mt-0.5 ml-[7px] size-16 bg-[#ebebeb]" aria-hidden="true">
                    <g className="blur-[1px]">
                        <path d="M9.500 12v42H50" fill="none" stroke="#5c5c5c" strokeWidth="4" />
                        <path d="M0 15L9 0l8 15zM48 43l14 10-14 10z" fill="#5c5c5c" />
                        <path d="M25 12h7l4-7h13l4 7h7v25H25z" fill="#f6f6f6" stroke="#5c5c5c" strokeWidth="4" />
                        <circle cx="43" cy="22" r="8" fill="#5c5c5c" />
                    </g>
                </svg>
                <Push className="mt-[9px] w-[78px]">Edit...</Push>
                <Push className="mt-1.5 w-[78px]">Export...</Push>
                <p className="mt-2 -ml-1 font-bold whitespace-nowrap">Name: RCDATA_16_DDVPOINT</p>
            </div>
            <fieldset className="h-[100px] w-[93px] shrink-0 rounded-[4px] border border-[#d5dfe5] px-[8px]">
                <legend className="px-0.5 leading-[18px]">Apply to:</legend>
                <div className="flex flex-col gap-2 pt-2">
                    {["Small image", "Large image", "Both"].map((label) => (
                        <label key={label} className="-ml-1 flex h-4 items-center gap-1 whitespace-nowrap">
                            <input type="radio" name="apply" defaultChecked={label === "Both"} className={radioCls} />
                            {label}
                        </label>
                    ))}
                </div>
            </fieldset>
            <div className="ml-[5px] grid w-[266px] shrink-0 grid-cols-11 overflow-hidden border border-[#1a2a8c]">
                {palette.map((name, i) => (
                    <button key={i} aria-label={name} className="flex size-6 items-center justify-center border-r border-b border-r-[#8ea5d8] border-b-[#d9d9d9] bg-[#ececec]">
                        <Icon name={name} />
                    </button>
                ))}
            </div>
            <div className="ml-auto mr-0.5 flex w-[15px] flex-col items-center bg-[#f4f4f4] py-1.5">
                <Caret className="rotate-180" />
                <div className="mt-2.5 h-[15px] w-[14px] rounded-sm border border-[#9a9a9a] bg-gradient-to-r from-white to-[#cfcfcf]" />
                <Caret className="mt-auto" />
            </div>
        </div>
    </section>
);

const properties: { group: string; rows: [string, string][] }[] = [
    {
        group: "Command",
        rows: [["Name", "Command1"], ["Description", ""], ["Extended Help File", ""], ["Command Display Name", ""], ["Macro", "^C^C_UCS _V"], ["Tags", ""]],
    },
    { group: "Advanced", rows: [["Element ID", "MMU_230_0198D"]] },
    { group: "Images", rows: [["Small image", "RCDATA_16_DDVPOINT"], ["Large image", "RCDATA_16_DDVPOINT"]] },
];

const Properties = () => (
    <section className="flex min-h-0 flex-1 flex-col border-2 border-[#a3afb8]">
        <GroupHeader title="Properties" />
        <div className="mx-2 mt-[10px] flex h-6 shrink-0 items-center">
            <button aria-label="Categorized" className="flex h-5 w-[22px] items-center justify-center rounded-[3px] border border-[#666] bg-[#d4d4d4]">
                <svg viewBox="0 0 18 16" className="h-4 w-[18px]">
                    <path d="M1.500 1.500h5v5h-5zM1.500 9.500h5v5h-5z" fill="#fff" stroke="#5a8ad0" />
                    <path d="M4 2.500v3M2.500 4h3M4 10.500v3M2.500 12h3" stroke="#111" />
                    <path d="M8 2.500h3M13 2.500h3M8 5.500h3M13 5.500h3M8 8.500h3M13 8.500h3M8 11.500h3M13 11.500h3M8 14.500h3M13 14.500h3" stroke="#6a86b4" />
                </svg>
            </button>
            <button aria-label="Alphabetical" className="ml-1">
                <svg viewBox="0 0 16 16" className="size-4">
                    <path d="M1 7l2.500-6L6 7M2 5h3" stroke="#2a55b0" strokeWidth="1.500" fill="none" />
                    <path d="M1 9.500h5L1 15h5" stroke="#a82a3a" strokeWidth="1.500" fill="none" />
                    <path d="M12.500 1v12M10 11l2.500 4 2.500-4z" stroke="#111" strokeWidth="1.500" fill="#111" />
                </svg>
            </button>
            <i className="mx-1.5 h-5 w-px bg-[#8c8c8c]" />
            <button aria-label="Property pages" disabled>
                <svg viewBox="0 0 16 16" className="size-4">
                    <path d="M0 0h16v16H0z" fill="#b9b9b9" />
                    <path d="M1.500 3.500h13v11h-13zM4 7h3l1 1h4v4H4zM6 10h4" fill="#e2e2e2" stroke="#9a9a9a" />
                </svg>
            </button>
            <Push disabled className="ml-auto w-[102px]">Reset Defaults</Push>
        </div>
        <div className="mx-2 mt-px min-h-0 flex-1 border border-[#a0a0a0] bg-white">
            <table className="w-full table-fixed border-separate border-spacing-0 text-left">
                <colgroup>
                    <col className="w-[21px]" />
                    <col className="w-[203px]" />
                    <col />
                </colgroup>
                {properties.map(({ group, rows }) => (
                    <tbody key={group}>
                        <tr className="h-4 bg-[#c8c8c8]">
                            <td className="p-0">
                                <button aria-label={`Collapse ${group}`} className="block pl-2">
                                    <svg viewBox="0 0 7 7" className="block size-[7px]"><path d="M6 1v5H1z" fill="#555" stroke="#222" /></svg>
                                </button>
                            </td>
                            <th colSpan={2} className="p-0 pl-[3px] leading-4 font-bold">{group}</th>
                        </tr>
                        {rows.map(([name, value]) => (
                            <tr key={name} className="h-4">
                                <td className="bg-[#c8c8c8] p-0" />
                                <td className="border-r border-b border-[#c8c8c8] p-0 pl-[3px] leading-[15px]">{name}</td>
                                <td className="border-b border-[#c8c8c8] p-0 pl-[3px] leading-[15px]">{value}</td>
                            </tr>
                        ))}
                    </tbody>
                ))}
            </table>
        </div>
        <div className="mx-2 mt-[3px] mb-2 h-[59px] shrink-0 border border-[#a0a0a0] px-1 pt-px font-bold">Command</div>
    </section>
);

const Dialog = () => (
    <div
        role="dialog"
        aria-label="Customize User Interface"
        className="absolute top-[71px] bottom-0 left-[10%] flex w-2/3 flex-col overflow-hidden rounded-t-[7px] border border-b-0 border-[#2a2d48] bg-gradient-to-b from-[#c3c8e8] to-[#5562d2] px-1.5 font-['Liberation_Sans',Arial,sans-serif] text-black shadow-[0_0_10px_rgba(20,20,60,0.6)]"
    >
        <div className="absolute inset-x-0 top-0 h-7 bg-gradient-to-r from-[#d0d4ee] via-[#b9bedf] to-[#c4c9ea]" />
        <svg className="absolute inset-y-0 right-0 h-full w-[190px]" aria-hidden="true">
            <path d="M20 32L195 2v434l-12 2V34z" fill="#86681c" className="blur-[3px]" />
            <path d="M108 12h26v20h-26z" fill="#5a3038" className="blur-[4px]" />
            <ellipse cx="160" cy="28" rx="16" ry="7" fill="#c9cdf0" className="blur-[3px]" />
        </svg>
        <div className="relative flex h-7 shrink-0 items-center">
            <svg viewBox="0 0 16 16" className="size-4" aria-hidden="true">
                <path d="M0 0h16v16H0z" fill="#d5e3f2" />
                <path d="M7 1h3l5 13h-4l-1-3q-4 0-8 3z" fill="#1d5a9c" />
                <path d="M8.500 6L10 9l-4 .5z" fill="#d5e3f2" />
            </svg>
            <span className="ml-[5px] font-['Open_Sans','Noto_Sans',sans-serif]">Customize User Interface</span>
            <div className="ml-auto flex h-[19px] self-start rounded-b-[5px] border border-t-0 border-[#6a6c88] bg-white/15 text-[#3c3c4c]">
                <button aria-label="Minimize" className="flex w-7 items-center justify-center border-r border-[#8a8ca8]">
                    <i className="h-1 w-3 rounded-sm border border-[#9a9cb4] bg-white/60" />
                </button>
                <button aria-label="Maximize" className="flex w-[26px] items-center justify-center border-r border-[#8a8ca8]">
                    <svg viewBox="0 0 12 10" className="h-2.5 w-3"><path d="M1 1h10v8H1z" fill="#fff" stroke="#444" strokeWidth="1.500" /><path d="M4.500 4h3v2h-3z" stroke="#444" fill="#bbb" /></svg>
                </button>
                <button aria-label="Close" className="flex w-[46px] items-center justify-center">
                    <svg viewBox="0 0 12 10" className="h-2.5 w-3">
                        <path d="M2 1l8 8M10 1L2 9" stroke="#444" strokeWidth="4" />
                        <path d="M2 1l8 8M10 1L2 9" stroke="#fff" strokeWidth="2" />
                    </svg>
                </button>
            </div>
        </div>
        <div className="relative flex min-h-0 flex-1 flex-col border border-b-0 border-[#4b4e66] bg-[#f0f0f0]">
            <div className="flex h-[25px] shrink-0 items-end pt-1">
                <button className="z-10 -mb-px h-[22px] w-[63px] border border-b-0 border-[#8c8c96] bg-white pb-0.5">Customize</button>
                <button className="h-[19px] w-[48px] border border-b-0 border-l-0 border-[#8c8c96] bg-gradient-to-b from-[#f2f2f2] to-[#d0d0d0]">Transfer</button>
            </div>
            <div className="mr-0.5 flex min-h-0 flex-1 border border-[#8c8c96] bg-white pt-0.5 pr-[3px] pb-0.5 pl-1">
                <div className="flex min-w-0 flex-1 bg-[#f0f0f0] pr-1">
                    <div className="flex min-w-0 flex-[495] flex-col">
                        <section className="border-2 border-b-0 border-[#a3afb8]">
                            <GroupHeader title="Customizations in All Files" down />
                        </section>
                        <CommandList />
                    </div>
                    <div className="ml-[23px] flex min-w-0 flex-[498] flex-col border-2 border-[#a3afb8] p-px">
                        <ButtonImage />
                        <div className="my-px flex h-1.5 shrink-0 items-center justify-center gap-1 border border-[#8d8e9e] bg-[#b3b4c8]">
                            <i className="size-1 rounded-full bg-white" />
                            <i className="size-1 rounded-full bg-white" />
                            <i className="size-1 rounded-full bg-white" />
                        </div>
                        <Properties />
                    </div>
                </div>
            </div>
            <footer className="flex h-[42px] shrink-0 items-start justify-end gap-[17px] pt-[7px] pr-[14px]">
                <Push className="w-[73px]">OK</Push>
                <Push className="w-[73px]">Cancel</Push>
                <Push disabled className="w-[73px]">Apply</Push>
                <Push className="w-[73px]">Help</Push>
                <button aria-label="Collapse dialog" className="-ml-0.5 bg-[#ebe8d8]">
                    <svg viewBox="0 0 22 22" className="size-[22px]">
                        <circle cx="11" cy="11" r="10" fill="#e6e9ee" stroke="#7c7f88" strokeWidth="1.500" />
                        <path d="M13 6l-5 5 5 5" fill="none" stroke="#2c3340" strokeWidth="3" />
                    </svg>
                </button>
            </footer>
            <svg viewBox="0 0 8 8" className="absolute right-0.5 bottom-0.5 size-2" aria-hidden="true">
                <path d="M6 0h2v2H6zM3 3h2v2H3zM6 3h2v2H6zM0 6h2v2H0zM3 6h2v2H3zM6 6h2v2H6z" fill="#b4b4b4" />
            </svg>
        </div>
    </div>
);

// ---- overflow toolbar, menu, tooltip ----
const LayerBar = () => (
    <div className="absolute top-[18px] right-[225px] flex h-6 w-[228px] border border-[#5c5c5c] bg-[#d8d8d8] p-px shadow-[3px_3px_4px_rgba(0,0,0,0.5)]">
        <div className="relative flex min-w-0 flex-1 items-center gap-1 border border-[#8a8a8a] bg-gradient-to-b from-[#ececec] to-[#c2c2c2] pl-[3px]">
            <svg viewBox="0 0 16 16" className="size-4 shrink-0" aria-hidden="true">
                <circle cx="8" cy="6" r="5.500" fill="#fcae14" />
                <path d="M6 12h4v3H6z" fill="#777" />
            </svg>
            <svg viewBox="0 0 16 16" className="size-4 shrink-0" aria-hidden="true">
                <path d="M8 1v14M1 8h14M3 3l10 10M13 3L3 13" stroke="#f59b10" strokeWidth="1.500" />
                <circle cx="8" cy="8" r="4" fill="#fcae14" />
            </svg>
            <svg viewBox="0 0 16 16" className="size-4 shrink-0" aria-hidden="true">
                <path d="M8 8V4q0-3 3-3t3 3v2" fill="none" stroke="#f59b10" strokeWidth="2" />
                <path d="M1 7h11v8H1z" fill="#f59b10" />
                <path d="M6 9.500h1.500v3H6z" fill="#fff" />
            </svg>
            <i className="size-3.5 shrink-0 border border-black bg-white" />
            <select aria-label="Layer" className="w-full appearance-none text-black"><option>Standard</option></select>
            <Caret className="absolute right-[3px] scale-150" />
        </div>
        <button aria-label="Customize toolbar" className="flex w-4 shrink-0 flex-col items-center justify-center gap-[3px] border border-[#2e74c4] bg-[#a9cdf3]">
            <i className="h-px w-2 bg-black" />
            <Caret className="scale-150" />
        </button>
    </div>
);

const checked = ["New", "Open", "Save", "Save As...", "Plot", "Undo", "Redo"];
const unchecked = [
    "Open from Web & Mobile", "Save to Web & Mobile", "Batch Plot", "Layer", "Match Properties",
    "Plot Preview", "Properties", "Render", "Sheet Set Manager", "Workspace",
];

const MenuItem = ({ label, on, active }: { label: string; on?: boolean; active?: boolean }) => (
    <li>
        <button
            className={`flex h-6 w-full items-center overflow-hidden pl-2.5 whitespace-nowrap ${
                active ? "bg-gradient-to-b from-[#d8eefb] to-[#bfe2f5] outline outline-1 -outline-offset-2 outline-[#1f6cb8]" : ""
            }`}
        >
            <svg viewBox="0 0 10 10" className="mr-2 size-2.5" aria-hidden="true">
                {on && <path d="M1 5.500L4 8l5-6" fill="none" stroke="#000" strokeWidth="2" />}
            </svg>
            {label}
        </button>
    </li>
);

const ToolbarMenu = () => (
    <div className="absolute top-[41px] right-[58px] w-[185px] border border-[#979797] bg-white text-black shadow-[4px_4px_5px_rgba(0,0,0,0.4)]">
        <h2 className="h-[19px] border-b border-[#cfcfcf] bg-[#ececec] pl-1 leading-[18px] whitespace-nowrap">Customize Quick Access Toolbar</h2>
        <ul>
            {checked.map((l) => <MenuItem key={l} label={l} on />)}
            {unchecked.map((l) => <MenuItem key={l} label={l} />)}
        </ul>
        <hr className="mx-px my-0.5 border-[#979797]" />
        <ul>
            <MenuItem label="More Commands..." active />
            <MenuItem label="Show Menu Bar" />
            <MenuItem label="Show Below the Ribbon" />
        </ul>
    </div>
);

const Tooltip = () => (
    <div role="tooltip" className="absolute top-[499px] right-0 w-[115px] overflow-hidden border border-r-0 border-[#767676] bg-[#f0f0f0] font-bold whitespace-nowrap text-[#505050]">
        <p className="h-[29px] border-b border-[#b4b4b4] pl-1.5 leading-[26px]">More Commands...</p>
        <p className="h-7 pl-1.5 leading-[28px]">Press F1 for more help</p>
    </div>
);

const Balloon = () => (
    <div className="absolute right-0 bottom-0 h-[57px] w-[75px] overflow-hidden rounded-tl-2xl border-t border-l border-black bg-[#ffffe1] whitespace-nowrap text-black">
        <div className="flex items-center pt-[9px] pl-2">
            <svg viewBox="0 0 16 16" className="size-4 shrink-0" aria-hidden="true">
                <circle cx="8" cy="8" r="7.500" fill="#2c50c0" stroke="#8a98c0" />
                <circle cx="7" cy="5" r="4" fill="#6f90e6" opacity=".6" />
                <path d="M8 3v2M8 6.500V13" stroke="#fff" strokeWidth="2" />
            </svg>
            <h2 className="ml-2.5 leading-4 font-bold">Plot and Publish</h2>
        </div>
        <p className="mt-1.5 pl-[14px] leading-4">No errors or warnings</p>
        <a href="#plot" className="mt-1 block pl-[17px] leading-4 text-[#0000e0]">Click to view</a>
    </div>
);

// pen marks drawn over the windows
const marks = [
    "M116 475L174 474",
    "M264 474L285 476L303 478",
    "M623 393Q628 400 631 411Q635 418 640 418Q646 417 651 412Q655 404 652 396Q648 390 640 389Q633 388 630 393L630 398",
    "M972 605L963 600Q945 592 920 590L911 597Q907 604 911 613Q918 625 937 631Q950 635 972 635L1000 635Q1022 634 1029 631Q1035 626 1029 618Q1022 606 1000 600Q984 597 964 599",
    "M1483 497L1483 493L1477 482L1463 478Q1450 473 1433 473L1413 473L1373 474L1333 475Q1320 478 1319 486Q1322 500 1332 505Q1345 508 1367 508L1407 509Q1425 506 1440 503L1483 497",
];

const Marks = () => (
    <svg className="pointer-events-none absolute inset-0 h-full w-full" aria-hidden="true">
        {marks.map((d) => <path key={d} d={d} fill="none" stroke="#000" strokeWidth="3" strokeLinecap="round" strokeLinejoin="round" />)}
    </svg>
);

export default function App() {
    return (
        <div className="relative flex h-screen flex-col overflow-hidden font-['Open_Sans','Noto_Sans',sans-serif] text-[11px] leading-[16px]">
            <QuickAccess />
            <RibbonTabs />
            <Ribbon />
            <DrawingTabs />
            <main className="relative min-h-0 flex-1 bg-gradient-to-b from-[#b4c2fa] to-[#4458ee]">
                <p className="relative pt-1.5 text-white">alistic]</p>
                <Plate />
                <Dialog />
            </main>
            <LayerBar />
            <ToolbarMenu />
            <Marks />
            <Tooltip />
            <Balloon />
        </div>
    );
}
